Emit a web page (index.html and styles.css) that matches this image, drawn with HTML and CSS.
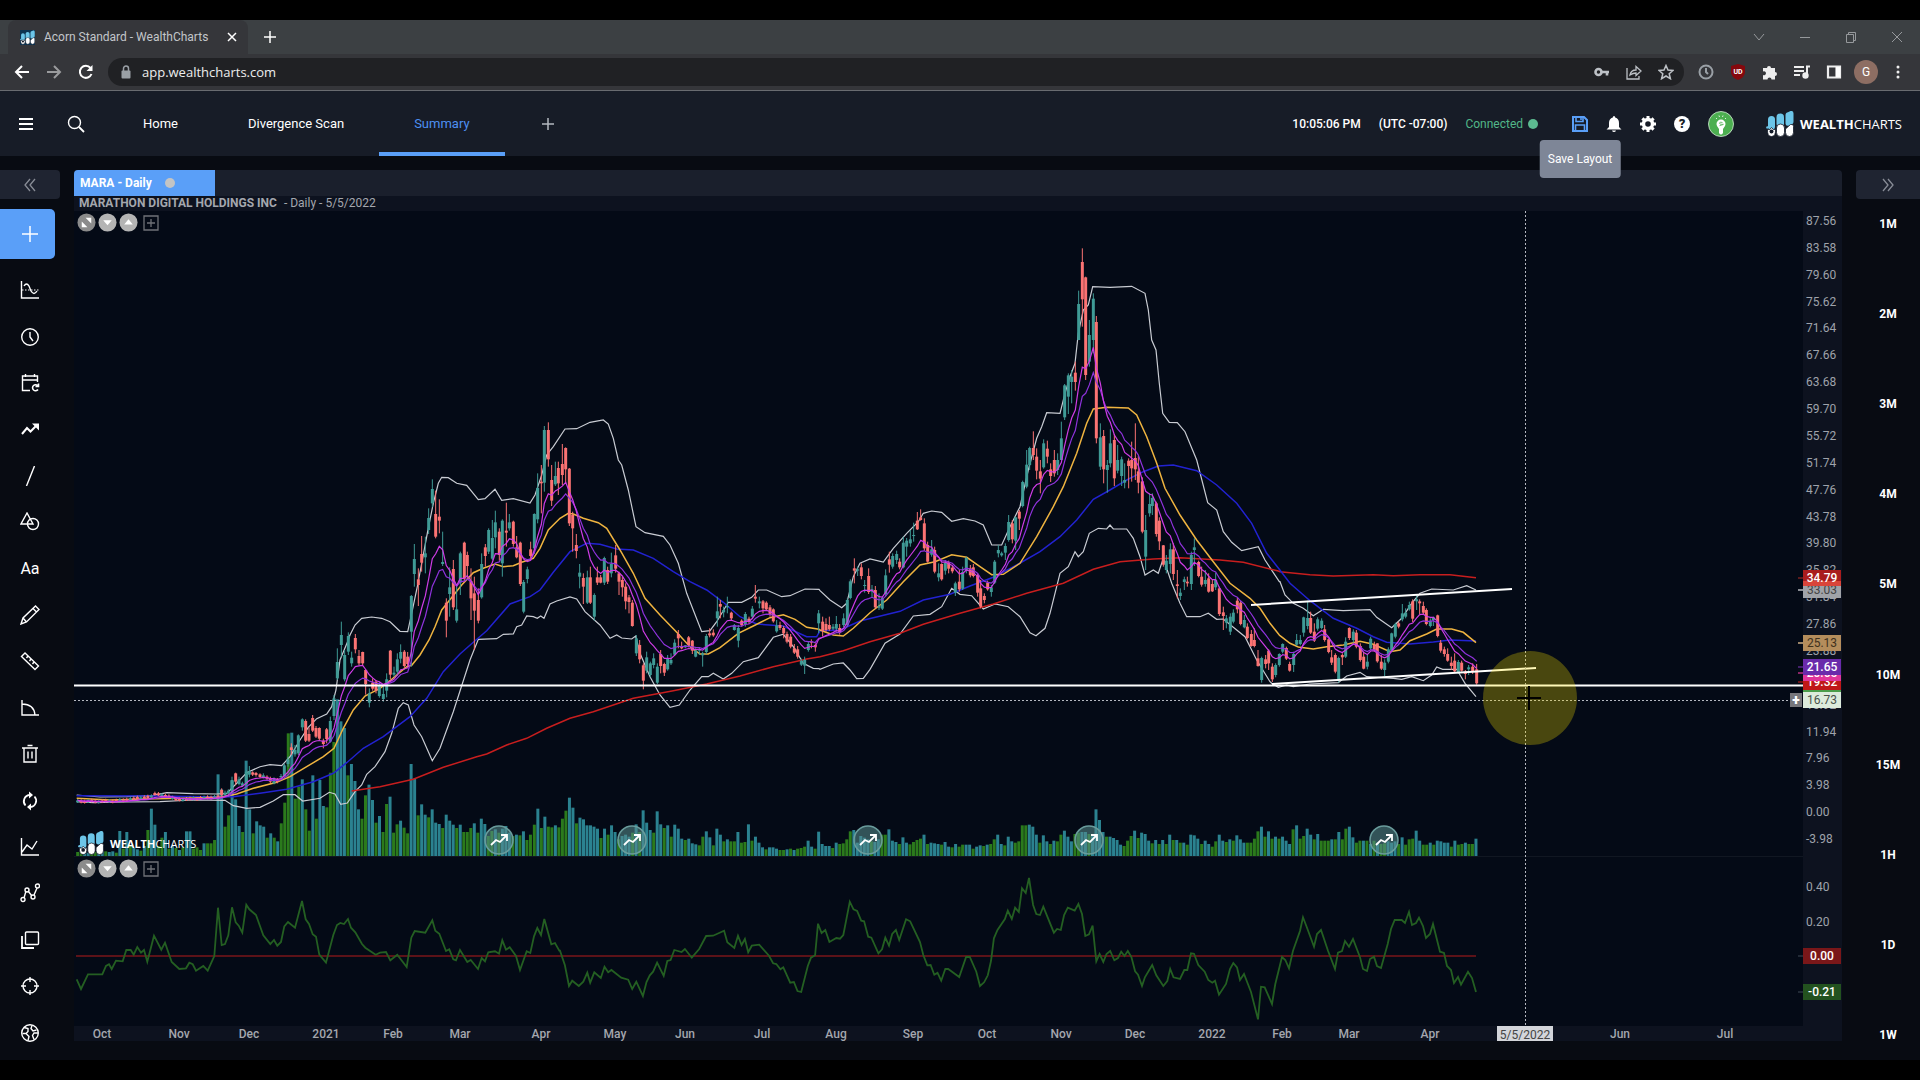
FILE: index.html
```html
<!DOCTYPE html>
<html lang="en">
<head>
    <meta charset="UTF-8">
    <meta name="viewport" content="width=device-width, initial-scale=1.0">
    <title>Acorn Standard - WealthCharts</title>
    <link rel="stylesheet" href="styles.css">
</head>
<body>
    <svg class="defs" width="0" height="0">
        <symbol id="logo" viewBox="0 0 28 26">
            <g fill="#6cc5e8">
                <rect x="2" y="5" width="7" height="14" rx="3.5"/>
                <rect x="10.500" y="2.500" width="7.500" height="14" rx="3.700"/>
                <path d="M19.500 4q0-2.500 3-3l2-1q3-.5 3 2.500v8q0 3-4 4t-4-2z"/>
                <circle cx="1.500" cy="16.500" r="1.300"/>
            </g>
            <g fill="#fff" stroke="#131a28" stroke-width=".8">
                <path d="M1.500 18q2.500 2 4-1.500 2 3.500 4 1.500.500 7.500-4 7.500t-4-7.500z"/>
                <rect x="10.500" y="13" width="8" height="12.500" rx="4"/>
                <path d="M19.500 18l5-4.500q3-1 3 2v6q0 4-4 4t-4-4z"/>
            </g>
            <circle cx="5.500" cy="20.500" r="2" fill="#131a28"/>
        </symbol>
        <symbol id="expand" viewBox="0 0 20 20">
            <circle cx="10" cy="10" r="9.500" fill="#8b8b8b"/>
            <path d="M9 5h6v6zM5 9v6h6z" fill="#fff"/>
        </symbol>
        <symbol id="down" viewBox="0 0 20 20">
            <circle cx="10" cy="10" r="9.500" fill="#b4b4b4"/>
            <path d="M5.500 7.500h9L10 13z" fill="#fff"/>
        </symbol>
        <symbol id="up" viewBox="0 0 20 20">
            <circle cx="10" cy="10" r="9.500" fill="#b4b4b4"/>
            <path d="M5.500 12h9L10 6.500z" fill="#fff"/>
        </symbol>
        <symbol id="plusbox" viewBox="0 0 16 16">
            <path d="M1 1h14v14H1zM8 4v8M4 8h8" fill="none" stroke="#6f7278" stroke-width="1.300"/>
        </symbol>
    </svg>

    <div class="tabstrip">
        <div class="browser-tab">
            <svg class="favicon" width="15" height="15"><use href="#logo"/></svg>
            <span>Acorn Standard - WealthCharts</span>
            <button aria-label="Close tab"><svg width="10" height="10" viewBox="0 0 10 10"><path d="M1 1l8 8M9 1L1 9"/></svg></button>
        </div>
        <button class="new-tab" aria-label="New tab"><svg width="12" height="12" viewBox="0 0 12 12"><path d="M6 0v12M0 6h12"/></svg></button>
        <div class="window-buttons">
            <button aria-label="Search tabs"><svg width="12" height="12" viewBox="0 0 12 12"><path d="M1 3l5 6 5-6"/></svg></button>
            <button aria-label="Minimize"><svg width="12" height="12" viewBox="0 0 12 12"><path d="M1 6.500h10"/></svg></button>
            <button aria-label="Restore"><svg width="12" height="12" viewBox="0 0 12 12"><path d="M1.500 3.500h7v8h-7zM3.500 3.500v-2h7v8h-2"/></svg></button>
            <button aria-label="Close"><svg width="12" height="12" viewBox="0 0 12 12"><path d="M1 1l10 10M11 1L1 11"/></svg></button>
        </div>
    </div>

    <div class="toolbar">
        <div class="nav-buttons">
            <button aria-label="Back"><svg width="16" height="16" viewBox="0 0 16 16"><path d="M15 8H2M8 2L2 8l6 6"/></svg></button>
            <button aria-label="Forward" class="dim"><svg width="16" height="16" viewBox="0 0 16 16"><path d="M1 8h13M8 2l6 6-6 6"/></svg></button>
            <button aria-label="Reload"><svg width="16" height="16" viewBox="0 0 16 16"><path d="M13.500 10A6 6 0 1 1 12.500 4"/><path d="M14.500 1v6h-6z" fill="#fff" stroke="none"/></svg></button>
        </div>
        <div class="address">
            <svg width="10" height="14" viewBox="0 0 10 14"><path d="M2.500 6V3.500a2.500 2.500 0 0 1 5 0V6" fill="none" stroke="#9aa0a6" stroke-width="1.500"/><rect x="0.500" y="5.500" width="9" height="8" rx="1" fill="#9aa0a6"/></svg>
            <input type="text" value="app.wealthcharts.com" aria-label="Address">
            <button aria-label="Passwords"><svg width="16" height="16" viewBox="0 0 16 16"><circle cx="4.500" cy="8" r="3" stroke-width="2.600"/><path d="M7 8h8M13 8v3.500" stroke-width="2.600"/></svg></button>
            <button aria-label="Share"><svg width="16" height="16" viewBox="0 0 16 16"><path d="M1 4v11h12v-3M4 11q1-5 6-5V2.500L15 7l-5 4.500V9q-3 0-6 2z" stroke-width="1.300"/></svg></button>
            <button aria-label="Bookmark"><svg width="16" height="16" viewBox="0 0 16 16"><path d="M8 1.500l2 4.600 5 .4-3.800 3.300 1.200 4.900L8 12l-4.400 2.700 1.200-4.900L1 6.500l5-.4z" stroke-width="1.500"/></svg></button>
        </div>
        <div class="extensions">
            <button aria-label="Timer"><svg width="16" height="16" viewBox="0 0 16 16"><circle cx="8" cy="8" r="6.500" stroke="#9aa0a6"/><path d="M8 4v4l2 2" stroke="#9aa0a6"/></svg></button>
            <button aria-label="Blocker" class="shield"><svg width="16" height="16" viewBox="0 0 16 16"><path d="M8 0l7 2v6q0 5-7 8-7-3-7-8V2z" fill="#85080d" stroke="none"/></svg><span>UD</span></button>
            <button aria-label="Extensions"><svg width="16" height="16" viewBox="0 0 16 16"><path d="M1 4h4a2 2 0 1 1 4 0h4v4a2 2 0 1 1 0 4v3.500H9.500a2 2 0 1 0-4 0H1V11a2 2 0 1 0 0-3.500z" fill="#eee" stroke="none"/></svg></button>
            <button aria-label="Media"><svg width="16" height="16" viewBox="0 0 16 16"><path d="M0 3h10M0 7h10M0 11h6M13 11V2.500h3"/><circle cx="11.500" cy="11.500" r="2.200" fill="#eee"/></svg></button>
            <button aria-label="Side panel"><svg width="16" height="16" viewBox="0 0 16 16"><path d="M2 2.500h12v11H2zM10.500 3v10" stroke-width="2.200"/><path d="M10 3h4v10h-4z" fill="#fff" stroke="none"/></svg></button>
            <button aria-label="Profile" class="avatar">G</button>
            <button aria-label="Menu"><svg width="16" height="16" viewBox="0 0 16 16"><g fill="#eee" stroke="none"><circle cx="8" cy="3" r="1.500"/><circle cx="8" cy="8" r="1.500"/><circle cx="8" cy="13" r="1.500"/></g></svg></button>
        </div>
    </div>

    <header class="app-header">
        <button class="menu" aria-label="Menu"><svg width="14" height="14" viewBox="0 0 14 14"><path d="M0 2h14M0 7h14M0 12h14" stroke-width="2"/></svg></button>
        <button class="search" aria-label="Search"><svg width="18" height="18" viewBox="0 0 18 18"><circle cx="7.500" cy="7.500" r="6" stroke-width="1.400"/><path d="M12 12l5 5" stroke-width="1.800"/></svg></button>
        <nav>
            <a href="#">Home</a>
            <a href="#">Divergence Scan</a>
            <a href="#" class="active">Summary</a>
        </nav>
        <button class="add-layout" aria-label="Add layout"><svg width="12" height="12" viewBox="0 0 12 12"><path d="M6 0v12M0 6h12" stroke="#b4b8c0"/></svg></button>
        <div class="status">
            <span>10:05:06 PM</span>
            <span>(UTC -07:00)</span>
            <span class="connected">Connected</span>
        </div>
        <div class="actions">
            <div class="save-wrap">
                <button aria-label="Save Layout"><svg width="16" height="16" viewBox="0 0 16 16"><path d="M1 1h11l3 3v11H1z" stroke="#5a9ff8" stroke-width="2"/><path d="M4 1v4.500h7V1M3.500 15V9h9v6M9 2v2" stroke="#5a9ff8" stroke-width="1.600"/></svg></button>
                <div class="tooltip">Save Layout</div>
            </div>
            <button aria-label="Alerts"><svg width="16" height="16" viewBox="0 0 16 16"><path d="M8 0q1.200 0 1.200 1.500Q13 2.800 13 7v4l2.500 2.500H.5L3 11V7q0-4.200 3.800-5.500Q6.800 0 8 0zM6 14.500h4q-.5 1.500-2 1.500t-2-1.500z" fill="#fff" stroke="none"/></svg></button>
            <button aria-label="Settings"><svg width="16" height="16" viewBox="0 0 16 16"><circle cx="8" cy="8" r="4.500" stroke-width="3.400"/><path d="M8 0v3M8 13v3M0 8h3M13 8h3M2.400 2.400l2 2M11.600 11.600l2 2M2.400 13.600l2-2M11.600 4.400l2-2" stroke-width="3"/></svg></button>
            <button aria-label="Help" class="help">?</button>
            <button aria-label="Ideas"><svg width="26" height="26" viewBox="0 0 26 26"><circle cx="13" cy="13" r="12.500" fill="#4caf50" stroke="#d6ecd7" stroke-width=".8"/><path d="M13 8.500a4.500 4.500 0 0 1 4.500 4.800q0 2-2.500 4.700v4q-2 3-4 0v-4q-2.500-2.700-2.500-4.700A4.500 4.500 0 0 1 13 8.500z" fill="#fff" stroke="none"/><path d="M8 7l1 1M11 4.500l.5 1.500M15 4.500L14.500 6M18 7l-1 1" stroke-width=".8"/><path d="M14.500 11.500q-3-1-3 .6t3 1.200-3 1.400" stroke="#4caf50" stroke-width=".8"/></svg></button>
        </div>
        <a href="#" class="brand"><svg width="28" height="26"><use href="#logo"/></svg><span><b>WEALTH</b>CHARTS</span></a>
    </header>

    <main class="workspace">
        <aside class="tools">
            <button class="collapse" aria-label="Collapse"><svg width="14" height="14" viewBox="0 0 14 14"><path d="M7 1L2 7l5 6M12 1L7 7l5 6"/></svg></button>
            <button class="add" aria-label="Add"><svg width="16" height="16" viewBox="0 0 16 16"><path d="M8 0v16M0 8h16"/></svg></button>
            <div class="tool-list">
                <button aria-label="Indicators"><svg viewBox="0 0 20 20"><path d="M1.500 1v17H19"/><path d="M4 6q2.500-4 5 0l2 5q3 5 6 0" /><path d="M2 10h17" stroke-dasharray="1.500 1.500" stroke-width="1"/></svg></button>
                <button aria-label="Time"><svg viewBox="0 0 20 20"><circle cx="10" cy="10" r="8.300"/><path d="M10 5v5l3 4"/></svg></button>
                <button aria-label="Calendar"><svg viewBox="0 0 20 20"><path d="M10 17.500H2.500V3h15v6M2.500 7h15M5.500 1v3M14.500 1v3"/><path d="M18 13a3 3 0 1 0 0 3.500M18.500 10.500V13.500h-3" stroke-width="1.600"/></svg></button>
                <button aria-label="Trend"><svg viewBox="0 0 20 20"><path d="M2 15l5-6 3.500 3.500L17 6" stroke-width="2"/><path d="M12 4.500h7v7z" fill="#fff" stroke="none"/></svg></button>
                <button aria-label="Line"><svg viewBox="0 0 20 20"><path d="M6.500 20l8-20"/></svg></button>
                <button aria-label="Shapes"><svg viewBox="0 0 20 20"><path d="M7 1L1 12h12z"/><circle cx="13" cy="12" r="5.500"/></svg></button>
                <button aria-label="Text" class="text-tool">Aa</button>
                <button aria-label="Pencil"><svg viewBox="0 0 20 20"><path d="M1 19l2-6L15.500 1l3.500 3.500L6.500 17zM3 13l3.500 4M13 3.500L16.500 7"/></svg></button>
                <button aria-label="Ruler"><svg viewBox="0 0 20 20"><path d="M5 2L1.500 5.500 15 18.500l3.500-3.500zM8 5L6.500 7M11 8L9.500 10M14 11l-1.500 2"/></svg></button>
                <button aria-label="Angle"><svg viewBox="0 0 20 20"><path d="M2 2v15h17M2 6q12 0 13 11"/></svg></button>
                <button aria-label="Delete"><svg viewBox="0 0 20 20"><path d="M2 4h16M7.500 1.500h5M4 4v14h12V4M8 7.500v7M12 7.500v7"/></svg></button>
                <button aria-label="Sync"><svg viewBox="0 0 20 20"><path d="M5.500 14.500A6.300 6.300 0 0 1 9.500 4M14.500 5.500A6.300 6.300 0 0 1 10.500 16" stroke-width="1.800"/><path d="M9 .5L13 4 9 7.500zM11 12.500L7 16l4 3.500z" fill="#fff" stroke="none"/></svg></button>
                <button aria-label="Chart"><svg viewBox="0 0 20 20"><path d="M1.500 1v17H19M2 15l5-7 5 4 5-8"/></svg></button>
                <button aria-label="Pattern"><svg viewBox="0 0 20 20"><path d="M4 15l2-7M8 8l4 5M14 12l3-7"/><circle cx="3" cy="16.500" r="2"/><circle cx="7" cy="7" r="2"/><circle cx="13" cy="14" r="2"/><circle cx="17.500" cy="3" r="2"/></svg></button>
                <button aria-label="Copy"><svg viewBox="0 0 20 20"><rect x="5.500" y="2" width="13" height="12.500" rx="1"/><path d="M2 6v12h12" stroke-width="1.800"/></svg></button>
                <button aria-label="Crosshair"><svg viewBox="0 0 20 20"><circle cx="10" cy="10" r="7"/><path d="M10 1v5M10 14v5M1 10h5M14 10h5"/></svg></button>
                <button aria-label="World"><svg viewBox="0 0 20 20"><circle cx="10" cy="10" r="8.300"/><path d="M4 4.500l4 1v3l-2 2H2.500M6 10.500l3 3-1 4M12 2.500l-1 3 2 2.500 3.500-1M18 10h-4l-1.500 2.500 1.500 4"/></svg></button>
            </div>
        </aside>

        <section class="chart">
            <div class="chart-tabs">
                <button class="chart-tab">MARA - Daily<i></i></button>
            </div>
            <div class="chart-title"><b>MARATHON DIGITAL HOLDINGS INC</b><span>- Daily - 5/5/2022</span></div>
            <div class="chart-body">
                <div class="plot">
                    <svg id="plot" viewBox="74 211 1729 815" preserveAspectRatio="none"></svg>
                    <div class="pane-buttons">
                        <button aria-label="Maximize"><svg><use href="#expand"/></svg></button>
                        <button aria-label="Move down"><svg><use href="#down"/></svg></button>
                        <button aria-label="Move up"><svg><use href="#up"/></svg></button>
                        <button aria-label="Add study" class="box"><svg><use href="#plusbox"/></svg></button>
                    </div>
                    <div class="pane-buttons lower">
                        <button aria-label="Maximize"><svg><use href="#expand"/></svg></button>
                        <button aria-label="Move down"><svg><use href="#down"/></svg></button>
                        <button aria-label="Move up"><svg><use href="#up"/></svg></button>
                        <button aria-label="Add study" class="box"><svg><use href="#plusbox"/></svg></button>
                    </div>
                    <div class="brand watermark"><svg width="26" height="24"><use href="#logo"/></svg><span><b>WEALTH</b>CHARTS</span></div>
                    <button class="add-line" aria-label="Add line">+</button>
                </div>
                <div class="price-axis" id="price-axis"></div>
            </div>
            <div class="time-axis" id="time-axis"></div>
        </section>

        <aside class="periods">
            <button class="collapse" aria-label="Expand"><svg width="14" height="14" viewBox="0 0 14 14"><path d="M2 1l5 6-5 6M7 1l5 6-5 6"/></svg></button>
            <div class="period-list">
                <button>1M</button>
                <button>2M</button>
                <button>3M</button>
                <button>4M</button>
                <button>5M</button>
                <button>10M</button>
                <button>15M</button>
                <button>1H</button>
                <button>1D</button>
                <button>1W</button>
            </div>
        </aside>
    </main>

    <script src="chart.js"></script>
</body>
</html>
```
FILE: styles.css
```css
* {
    box-sizing: border-box;
}
body {
    margin: 0;
    min-height: 100vh;
    padding: 20px 0;
    display: flex;
    flex-direction: column;
    background: #000;
    color: #fff;
    font-family: Roboto, "Liberation Sans", sans-serif;
    font-size: 12px;
    overflow: hidden;
}
button {
    display: flex;
    align-items: center;
    justify-content: center;
    padding: 0;
    border: 0;
    background: none;
    color: inherit;
    font: inherit;
    cursor: pointer;
}
button svg {
    fill: none;
    stroke: #fff;
    stroke-width: 1.5;
}
a {
    color: inherit;
    text-decoration: none;
}
.defs {
    position: absolute;
}

/* browser */
.tabstrip {
    display: flex;
    align-items: center;
    height: 34px;
    padding-left: 8px;
    background: #3c4043;
}
.browser-tab {
    display: flex;
    align-items: center;
    gap: 9px;
    width: 240px;
    height: 34px;
    padding: 0 11px 0 12px;
    border-radius: 8px 8px 0 0;
    background: #35363a;
    color: #c3c6ca;
    white-space: nowrap;
}
.browser-tab span {
    flex: 1;
}
.favicon {
    background: #0d3350;
}
.new-tab {
    width: 44px;
}
.window-buttons {
    display: flex;
    margin-left: auto;
}
.window-buttons button {
    width: 46px;
}
.window-buttons svg {
    stroke: #96999c;
    stroke-width: 1;
}
.toolbar {
    display: flex;
    align-items: center;
    height: 37px;
    border-bottom: 1px solid #696b70;
    background: #35363a;
}
.nav-buttons {
    display: flex;
    gap: 16px;
    width: 108px;
    padding-left: 14px;
}
.nav-buttons svg {
    stroke-width: 2;
}
.dim {
    opacity: .5;
}
.address {
    flex: 1;
    display: flex;
    align-items: center;
    gap: 16px;
    height: 28px;
    padding: 0 10px 0 13px;
    border-radius: 14px;
    background: #202124;
}
.address input {
    flex: 1;
    margin-left: -5px;
    padding: 0;
    border: 0;
    background: none;
    color: #eee;
    font-family: "Open Sans", sans-serif;
    font-size: 13px;
}
.address button svg {
    stroke: #bdc1c6;
}
.extensions {
    display: flex;
    gap: 8px;
    padding: 0 10px;
}
.extensions button {
    width: 24px;
    height: 24px;
}
.extensions svg {
    stroke: #eee;
    stroke-width: 2;
}
.shield {
    position: relative;
}
.shield span {
    position: absolute;
    font-size: 7px;
    font-weight: 700;
}
.extensions .avatar {
    border-radius: 50%;
    background: #8d6e63;
}

/* app header */
.app-header {
    display: flex;
    align-items: center;
    height: 65px;
    padding-right: 18px;
    background: #171c27;
}
.menu {
    width: 52px;
}
.search {
    width: 48px;
}
.app-header nav {
    display: flex;
    margin-left: 8px;
    align-self: stretch;
}
.app-header nav a {
    display: flex;
    align-items: center;
    padding: 4px 35px 0;
    border-bottom: 4px solid transparent;
    font-size: 13px;
}
.app-header nav .active {
    border-color: #5a9ff8;
    color: #4d8ff0;
}
.add-layout {
    width: 86px;
}
.status {
    display: flex;
    gap: 18px;
    margin-left: auto;
    font-weight: 500;
}
.connected {
    display: flex;
    align-items: center;
    gap: 5px;
    color: #52b788;
    font-weight: 400;
}
.connected::after {
    content: "";
    width: 10px;
    height: 10px;
    border-radius: 50%;
    background: #5cba90;
}
.actions {
    display: flex;
    align-items: center;
    gap: 18px;
    margin: 0 32px 0 34px;
}
.save-wrap {
    position: relative;
}
.tooltip {
    position: absolute;
    z-index: 5;
    top: 24px;
    left: 50%;
    transform: translateX(-50%);
    padding: 11px 8px;
    border-radius: 4px;
    background: #7e8697;
    line-height: 16px;
    white-space: nowrap;
}
.help {
    width: 16px;
    height: 16px;
    border-radius: 50%;
    background: #fff;
    color: #171c27;
    font-size: 13px;
    font-weight: 900;
}
.brand {
    display: flex;
    align-items: center;
    gap: 6px;
    font-family: "Open Sans", sans-serif;
    font-size: 13px;
}

/* workspace */
.workspace {
    flex: 1;
    display: flex;
    gap: 14px;
    padding-top: 14px;
    background: #080b12;
}
.tools {
    display: flex;
    flex-direction: column;
    width: 60px;
}
.collapse {
    width: 100%;
    height: 29px;
    border-radius: 0 4px 4px 0;
    background: #1f2431;
}
.collapse svg {
    stroke: #888c96;
    stroke-width: 1.3;
}
.add {
    width: 55px;
    height: 50px;
    margin: 10px 0 8px;
    padding-left: 5px;
    border-radius: 0 5px 5px 0;
    background: #5a9ff8;
}
.tool-list {
    flex: 1;
    display: flex;
    flex-direction: column;
    padding-bottom: 4px;
}
.tool-list button {
    flex: 1;
}
.tool-list svg {
    width: 20px;
    height: 20px;
    stroke-width: 1.4;
}
.text-tool {
    font-size: 16px;
}
.chart {
    flex: 1;
    display: flex;
    flex-direction: column;
    margin-bottom: 19px;
}
.chart-tabs {
    display: flex;
    height: 26px;
    border-radius: 4px 4px 0 0;
    background: #1a1f2c;
}
.chart-tab {
    justify-content: flex-start;
    gap: 13px;
    width: 141px;
    padding-left: 6px;
    border-radius: 4px 0 0 0;
    background: #5a9ff8;
    font-weight: 700;
}
.chart-tab i {
    width: 10px;
    height: 10px;
    border-radius: 50%;
    background: #c4c4c4;
}
.chart-title {
    display: flex;
    gap: 7px;
    height: 15px;
    padding-left: 5px;
    background: #0d121f;
    color: #a4a7ae;
    line-height: 14px;
}
.chart-body {
    flex: 1;
    display: flex;
}
.plot {
    position: relative;
    flex: 1;
    background: #040a16;
}
#plot {
    position: absolute;
    width: 100%;
    height: 100%;
}
.pane-buttons {
    position: absolute;
    top: 2px;
    left: 3px;
    display: flex;
    align-items: center;
    gap: 2px;
}
.pane-buttons.lower {
    top: 648px;
}
.pane-buttons svg {
    width: 19px;
    height: 19px;
    stroke: none;
}
.pane-buttons .box {
    margin-left: 3px;
}
.pane-buttons .box svg {
    width: 16px;
    height: 16px;
}
.watermark {
    position: absolute;
    top: 620px;
    left: 4px;
    font-size: 11px;
}
.add-line {
    position: absolute;
    top: 482px;
    right: 1px;
    width: 12px;
    height: 14px;
    background: #77777c;
    font-size: 14px;
    font-weight: 900;
}
.price-axis {
    position: relative;
    width: 39px;
    background: #0d121f;
    color: #9fa3ab;
}
.price-axis span {
    position: absolute;
    left: 3px;
    line-height: 16px;
    margin-top: -8px;
}
.price-axis .tag {
    left: 0;
    width: 38px;
    color: #fff;
    font-weight: 500;
    text-align: center;
}
.price-axis .red { background: linear-gradient(#a91d1d 70%, #d9453a 70%); }
.price-axis .gray { background: #a0a3a8; color: #444; font-weight: 400; }
.price-axis .tan { background: #b48d5c; color: #40311c; font-weight: 400; }
.price-axis .violet { background: #6a2bab; }
.price-axis .pink { background: #e0359a; }
.price-axis .crimson { background: #c01818; }
.price-axis .lime { background: #4a9d4a; }
.price-axis .pale { background: #dcebdc; color: #4a524a; font-weight: 400; }
.price-axis .maroon { background: #7a1719; }
.price-axis .green { background: #23521f; }
.time-axis {
    position: relative;
    height: 15px;
    background: #0d121f;
    color: #a4a7ae;
    font-weight: 500;
    line-height: 17px;
}
.time-axis span {
    position: absolute;
    transform: translateX(-50%);
}
.time-axis .date {
    width: 56px;
    height: 15px;
    background: #d3d5da;
    color: #444;
    font-weight: 400;
    line-height: 19px;
    text-align: center;
}
.periods {
    display: flex;
    flex-direction: column;
    width: 64px;
}
.periods .collapse {
    border-radius: 4px 0 0 4px;
}
.period-list {
    flex: 1;
    display: flex;
    flex-direction: column;
    justify-content: space-between;
    padding: 17px 0;
}
.period-list button {
    height: 16px;
    font-weight: 700;
}

/* chart drawing */
#plot path, #plot line {
    fill: none;
}
#plot .up { stroke: #3f9b96; }
#plot .down { stroke: #fb7373; }
#plot .body { stroke-width: 3; }
#plot .vol-t { stroke: #2b8290; stroke-width: 3; }
#plot .vol-g { stroke: #2b7a1c; stroke-width: 3; }
#plot .band { stroke: #c9ccd3; stroke-width: 1.2; }
#plot .mid { stroke: #efb440; stroke-width: 1.5; }
#plot .blue { stroke: #2222d0; stroke-width: 1.5; }
#plot .long { stroke: #c81e1e; stroke-width: 1.5; }
#plot .fast { stroke: #cf3ce6; stroke-width: 1.2; }
#plot .slow { stroke: #8f33dc; stroke-width: 1.2; }
#plot .osc { stroke: #245f22; stroke-width: 1.8; }
#plot .zero { stroke: #5c1218; stroke-width: 2; }
#plot .trend { stroke: #fff; stroke-width: 2; }
#plot .cross { stroke: #b5b8c0; stroke-dasharray: 2 2; }
#plot .split { stroke: #111722; }
#plot .cursor { stroke: #000; stroke-width: 2; }
#plot .halo { fill: #ffe600; fill-opacity: .28; }
#plot .marker circle { fill: #5a9090; fill-opacity: .55; stroke: #6a9c9c; stroke-width: 1.5; }
#plot .marker path { stroke: #fff; stroke-width: 1.8; }
```
FILE: chart.js
```javascript
// Every data block has its own origin [x, y] and x scale; y runs in thirds of a unit.
const A = [60, 640, 1 / 3];
const B = [340, 400, 1 / 3];
const C = [820, 230, 1 / 3];
const D = [1160, 540, 1 / 3];
const E = [560, 780, 0.40816];
const F = [1180, 780, 1 / 3];

const plot = document.getElementById('plot');

function add(tag, cls, attrs, parent = plot) {
    const el = document.createElementNS('http://www.w3.org/2000/svg', tag);
    if (cls) el.setAttribute('class', cls);
    for (const key in attrs) el.setAttribute(key, attrs[key]);
    parent.appendChild(el);
    return el;
}

function toPath(points) {
    return 'M' + points.map(p => p[0].toFixed(1) + ' ' + p[1].toFixed(1)).join('L');
}

function line(cls, ...blocks) {
    const points = [];
    for (const [o, text] of blocks) {
        for (const pair of text.split(' ')) {
            const [x, y] = pair.split(',').map(Number);
            points.push([o[0] + x * o[2], o[1] + y / 3]);
        }
    }
    add('path', cls, { d: toPath(points) });
}

// volume, one bar per session: block, first x, step, bars
const volume = [
    [A, 53, 10.53, 'g12 g14 t12 t10 g16 g12 t20 t14 g14 t12 t14 g10 t75 g22 t72 g30 t24 t20 g16 t30 g78 t142 t94 g30 g55 t72 g22 t30 g24 t18 g26 t74 t74 g22 g26 g18 t38 g38 g38 g48 t245 t200 g88 g122 t225 t170 t90 g72 t286 t140 g68 t104 t92 t88 g55 t68 g55 t44 g98 g160 g368 t370 g172 g208 t230 g140 g76 t242 g112 t228 t150 g146 g250 g342 t470 t404 t384 g242 t276 t225 t140 g112 g182 t214 t168 g100 t120 g72 g156 t178 g70 g95 t106 g85 g68 t276 t232 g122 t155 t124 g116 t140 t100 t96 g84 t124 t106 t94 g84 t94 g72 g72 g84 t98 g70 t112 t96 g60 g75 t80 g70 t82 t90 t70 g60 t64 g62 t74 g48 g64'],
    [B, 583, 10.53, 'g94 t142 g84 t118 g88 g86 t92 g86 g112 g136 t175 t145 g98 t115 t110 t92 t92 t88 t82 g54 t82 g64 t92 t72 g50 t60 t64 t58 g70 t95 g72 t137 t100 t78 g70 t134 t95 g84 t92 g58 t94 t82 t52 g48 t52 t38 t35 g32 g58 t74 t56 g32 t82 t64 g44 t50 g44 g44 t72 g40 g42 t95 g46 t58 t40 t26 g20 t26 t26 t22 g18 g18 t20 g22 t18 g22 g24 g28 t46 t28 g22 t73 t36 t30 t30 g24 t40 g36'],
    [E, 694, 8.6, 'g38 g50 g74 t78 t40 t60 t55 t50 g44 t42 t50 g64 g64 t80 t46 t42 g36 t56 t40 g35 g42 g48 g52 t64 g36 t40 t38 t36 g34 t42 t28 g26 t36 g28 g34 t34 t34 g22 t28 t32 g30 t34 g36 g50 t64 t36 g32 t58 t44 g40 g44 g92 g92 t94 t88 t64 g40 t62 t44 g36 t46 g44 g64 t76 t58 t44 g66 g70 t72 t72 g66 t66 t140 t108 t72 g58 t58 t54 t48 t34 g30 g46 g60 t76 g54 t70 t66 t46 g38 t48 g36 t48 g36 t64 g48 t48 g40 t40 g34 t64 t62 t52'],
    [F, 65, 10.55, 'g36 t46 t36 g28 g44 t64 t46 g42 t50 g46 t62 t50 t40 g40 g40 g52 g74 t88 g58 t74 g52 t58 g52 t58 t46 t36 g80 t92 g52 g60 t82 t64 g50 t66 g46 g46 g46 t50 g50 t72 g50 g82 t88 t56 g40 g46 t46 g46 t36 g46 t40 g36 g38 t44 t40 t44 g36 t56 g34 g50 g52 t76 t46 g34 g34 t40 g34 t46 t44 t40 t40 g28 t46 g34 g36 t40 g36 g36 t52']
];
for (const [o, start, step, bars] of volume) {
    bars.split(' ').forEach((bar, i) => {
        const x = o[0] + (start + i * step) * o[2];
        add('line', 'vol-' + bar[0], { x1: x, x2: x, y1: 856, y2: 856 - bar.slice(1) / 3 });
    });
}

// studies
line('band',
    [A, '50,465 120,471 200,470 280,466 320,458 400,461 470,462 500,460 525,435 560,398 600,380 630,374 665,377 690,350 720,300 745,262 770,236 800,222 815,200 828,150 840,60 865,0'],
    [B, '30,705 45,675 65,655 95,651 125,655 150,665 180,694 203,695 215,640 232,560 245,490 262,400 280,310 295,250 305,232 325,233 350,250 380,256 415,299 435,296 465,268 485,301 520,296 570,309 585,285 605,225 620,165 640,140 675,87 710,86 750,67 790,60 805,72 820,115 835,180 845,195 865,270 888,380 915,398 970,409 990,435 1015,490 1040,580 1085,695 1110,692 1130,665 1165,607 1205,607 1235,592 1255,570 1280,570 1325,590 1350,587 1395,567 1437,568'],
    [C, '0,1082 30,1110 65,1133 80,1120 100,1040 120,1000 150,987 190,996 220,955 260,910 295,875 310,850 335,843 365,847 395,874 430,866 465,873 490,885 515,945 545,945 570,890 600,830 625,720 650,625 665,590 680,548 720,550 735,490 750,440 765,400 775,310 790,240 805,225 818,170 870,172 935,169 975,190 985,240 995,330 1008,360 1018,460 1028,550 1048,577 1072,578 1095,605 1130,690 1163,818 1190,840 1210,905 1235,937 1265,962 1315,950 1335,990 1378,1055'],
    [D, '360,125 375,165 400,190 430,205 460,227 490,208 550,212 630,209 650,232 695,263 725,235 755,190 780,160 815,147 880,150 920,137 948,150']);
line('band',
    [A, '50,485 100,488 200,486 300,485 400,480 495,481 520,497 560,505 600,502 640,483 670,464 705,464 728,483 780,475 808,457 825,462 842,493 862,489 885,455 905,435 920,403 945,380 975,335 995,280 1015,205 1030,188 1045,195 1062,255 1085,290 1117,362 1140,325 1180,215 1230,60'],
    [B, '415,718 470,716 490,703 520,702 530,680 545,675 560,648 580,650 592,655 602,648 612,655 630,612 650,603 690,591 710,597 735,635 780,675 810,715 830,705 845,714 875,717 887,708 900,760 930,830 960,885 990,922 1018,915 1050,870 1085,830 1105,830 1120,820 1150,837 1175,820 1210,785 1255,773 1300,712 1330,703 1360,740 1390,790 1420,805 1437,806'],
    [C, '0,1318 40,1302 70,1299 90,1320 110,1346 130,1345 150,1318 195,1240 240,1212 280,1158 330,1153 365,1130 395,1075 420,1093 455,1097 490,1137 525,1122 565,1130 600,1160 630,1208 648,1217 675,1195 690,1150 720,1030 745,1010 765,965 775,980 790,965 808,910 835,895 860,897 870,885 880,897 920,897 940,925 960,980 975,1035 1000,1020 1015,1030 1030,985 1055,1060 1080,1120 1100,1160 1140,1160 1165,1150 1190,1168 1210,1167 1250,1200 1275,1220 1310,1290 1350,1355'],
    [D, '335,430 355,442 380,435 400,440 450,432 535,428 560,408 600,397 620,410 700,415 725,418 755,410 790,422 815,405 830,381 848,388 890,388 915,430 948,470']);
line('long',
    [A, '875,453 960,440 1060,418 1150,382 1250,350'],
    [B, '440,1062 500,1035 560,1015 620,985 690,955 760,935 880,895 1000,872 1100,852 1200,828 1300,800 1400,777'],
    [C, '0,1280 70,1262 150,1235 240,1210 310,1183 420,1150 520,1122 620,1090 730,1060 820,1018 900,995 1000,987 1080,983 1200,990 1270,997 1375,1023'],
    [D, '360,95 450,104 520,108 640,104 700,107 780,104 870,104 948,113']);
line('blue',
    [A, '50,467 300,468 420,470 520,470 600,460 680,448 760,425 820,400 860,368 910,325 970,290 1050,230 1100,175 1150,95 1200,42'],
    [B, '400,727 440,692 510,612 570,590 600,570 640,517 690,455 740,430 780,433 830,447 880,450 940,475 1000,515 1050,545 1100,570 1150,607 1200,650 1250,672 1330,678 1400,710 1430,710'],
    [C, '0,1202 60,1200 120,1173 240,1144 310,1110 390,1093 450,1068 520,1042 590,1005 660,965 720,920 770,870 820,808 870,780 920,750 970,725 1015,708 1060,705 1130,722 1190,765 1250,820 1295,880 1340,970 1378,1018'],
    [D, '390,130 450,182 520,235 590,265 640,290 680,307 750,312 820,306 870,300 948,303']);
line('mid',
    [A, '50,475 150,480 250,477 400,474 480,472 530,462 580,445 650,427 690,410 740,380 790,350 822,325 850,265 880,210 915,168 960,145 990,122 1010,105 1040,80 1055,76 1080,45'],
    [B, '267,720 285,680 305,630 325,605 365,555 400,518 430,505 465,492 490,500 520,497 545,487 580,475 600,445 625,390 660,355 685,340 700,342 730,355 775,368 800,385 840,450 880,520 915,595 960,645 1010,697 1050,740 1080,762 1105,762 1140,743 1195,700 1240,678 1290,653 1330,644 1365,658 1400,682 1437,688'],
    [C, '0,1200 40,1215 70,1218 100,1195 150,1148 200,1110 250,1055 300,1005 345,995 395,974 440,982 480,1010 515,1034 550,1033 600,1000 650,920 700,830 730,770 770,670 800,580 820,537 860,532 925,534 950,555 980,620 1010,700 1035,775 1080,855 1130,930 1180,995 1230,1060 1290,1105 1320,1135 1350,1180 1378,1215'],
    [D, '360,287 390,310 415,321 460,327 500,320 550,315 600,304 640,313 690,335 720,330 750,302 800,282 830,267 875,267 910,277 948,308']);

// candles: colour + x, high, body top, body bottom, low
const candles = [];
'484 485 486 484 483 485 486 484 483 484 485 483 481 482 480 478 476 474 475 473 471 470 462 463 466 468 470 474 478 479 480 478 477 476 478 475 474 473 474 472 470'.split(' ').forEach((y, i) => {
    candles.push([A, i % 3 ? 'r' : 'g', 53 + i * 10.53, y - 7, y - 3, +y + 3, +y + 5]);
});
const groups = [
    [A, 'r485 445 450 465 468,g495 452 458 465 468,g505 448 452 460 463,g516 410 420 452 458,r527 398 400 425 435,g537 410 418 432 436,g547 425 430 437 440,g559 390 395 432 436,g568 378 394 404 412,r578 394 397 404 408,r588 396 399 405 410,r600 400 403 411 414,g610 400 406 411 415,r621 406 410 416 420,r631 410 414 425 430,g642 412 416 430 433,r652 414 418 426 430,g663 402 408 412 416,g673 370 376 408 410,g684 350 358 372 380,r694 310 322 330 345,g705 315 330 343 350,g715 283 286 340 345,g727 235 238 262 272,r737 238 243 302 306,r747 262 282 302 306,r758 225 234 272 276,r768 258 264 290 294,r778 262 264 296 300,r790 296 302 312 325,r800 264 268 297 310,g811 230 243 305 308,g822 165 175 228 240,g832 25 66 115 120'],
    [B, 'g4 665 705 735 770,g14 750 765 838 844,g25 697 708 755 765,g35 755 773 790 800,r46 702 714 748 760,r57 750 768 790 796,r68 755 756 790 796,r77 808 810 852 884,g88 865 880 908 922,r98 835 848 866 872,r108 840 845 872 880,g118 845 855 888 893,g130 855 882 897 905,g140 820 838 872 892,r151 750 752 824 838,g162 800 818 824 830,g172 760 778 815 828,g182 733 756 776 790,r193 750 755 798 803,r203 756 770 792 798,g214 585 588 695 800,g223 432 477 522 560,r235 505 538 555 618,r245 408 462 488 515,g256 410 460 472 520,g266 325 354 390 402,g277 238 267 310 322,r287 272 342 410 415,r298 298 350 362 400,g308 395 486 492 498,r319 595 608 662 712,g329 502 562 582 650,r340 480 507 622 630,g350 560 628 662 668,g361 455 460 548 585,r373 425 428 536 548,r382 455 465 498 540,r393 505 543 595 660,r403 530 580 632 750,r415 565 600 662 670,g425 460 492 592 596,r436 432 442 468 500,g446 385 390 455 462,g457 360 414 476 480,g466 332 367 412 445,r478 385 395 465 482,g487 358 362 490 530,r499 308 392 398 440,g508 342 367 385 392,r520 362 365 432 440,r530 408 442 472 475,r541 425 428 552 558,g551 540 546 635 640,g562 500 508 537 550,r572 425 448 468 480,g583 340 342 445 462,g593 220 264 358 370,r604 195 245 250 340,g613 78 90 248 275,r625 67 90 178 200,r635 195 240 302 318,g646 185 228 253 258,r655 185 204 250 285,r667 132 192 225 255,r677 142 144 208 250,r688 204 206 370 378,r698 335 345 385 455,r709 402 435 453 475,g719 492 518 530 565,r730 520 534 560 612,g742 512 532 608 612,r751 500 532 608 612,g763 580 585 650 662,r772 500 532 548 555,r782 525 532 548 550,g793 470 474 548 555,r803 500 510 545 552,g814 458 492 520 532,r827 435 466 506 518,r837 515 520 545 585,r847 530 540 562 590,r857 550 560 604 628,r867 585 592 606 640,r877 600 608 678 680,g889 705 715 760 768,r899 720 735 778 790,r910 790 796 842 868,g920 755 772 812 820,g931 785 790 825 832,g941 760 775 795 805,g952 790 800 848 852,r962 750 762 798 820,r973 788 792 818 828,g983 765 775 808 812,g993 760 780 790 795,g1004 718 728 764 768,r1015 690 702 715 745,r1025 725 738 745 748,g1036 735 736 742 745,r1046 708 712 735 742,r1057 720 722 752 762,g1067 745 752 770 772,g1078 742 748 752 765,g1088 755 760 766 800,g1099 702 708 756 762,r1109 685 700 706 712,r1120 688 698 706 710,g1132 590 634 655 680,r1141 600 612 620 655,g1151 620 630 637 652,g1162 590 618 622 640,r1174 635 638 655 660,g1183 672 675 690 692,g1195 675 684 722 742,r1205 658 662 675 680,g1216 636 642 672 680,r1227 650 656 666 672,g1237 618 626 650 655,r1246 555 590 596 608,g1258 590 604 610 625,r1269 600 604 625 640,r1279 604 608 628 630,r1290 615 622 645 650,r1300 625 628 664 668,g1310 660 676 694 698,r1320 665 675 684 690,r1331 678 684 700 715,r1341 695 702 725 730,r1352 702 710 740 745,r1363 732 745 758 762,r1373 738 748 770 776,g1384 776 782 794 798,g1394 770 780 797 822,g1405 725 732 750 755,r1414 718 724 728 745,r1426 730 735 742 755,g1436 630 640 670 700,r1448 650 665 692 710,r1458 655 672 690 695,r1468 650 675 688 692,g1479 672 680 686 690,g1489 648 672 686 695,r1499 672 684 698 704'],
    [C, 'g71 1150 1165 1185 1192,g82 1105 1110 1186 1190,g91 1048 1054 1104 1108,r103 985 1015 1022 1060,g113 1010 1018 1022 1038,r124 1000 1012 1038 1048,g134 1050 1065 1068 1088,r146 1015 1038 1086 1092,g156 1065 1078 1085 1102,r166 1068 1080 1132 1136,g177 1090 1128 1133 1140,g187 1100 1104 1136 1140,g197 1018 1036 1092 1098,r208 965 988 1004 1028,g218 970 978 1010 1016,g230 962 972 990 1002,r239 985 995 1012 1018,g250 920 938 1012 1015,g260 924 932 950 980,g271 900 928 940 950,g281 878 915 918 935,r292 846 872 898 900,r302 838 862 870 872,r313 865 880 955 962,r323 935 945 995 998,g335 930 958 974 980,r344 950 960 1025 1030,g356 1000 1030 1042 1054,r365 1000 1002 1048 1052,g376 990 998 1022 1034,r386 992 997 1016 1030,r397 1008 1013 1024 1030,g406 1055 1060 1088 1098,r418 1020 1055 1078 1085,g428 1010 1026 1076 1080,g439 980 984 1022 1030,r451 1005 1015 1036 1042,r460 1002 1012 1038 1042,r473 1030 1035 1088 1100,r482 1050 1075 1130 1135,r493 1090 1098 1110 1120,r503 1052 1058 1078 1082,g514 1065 1072 1086 1100,g524 990 995 1058 1062,g535 945 960 970 982,g545 965 970 976 980,g556 940 948 968 990,g566 855 876 930 935,r577 870 880 928 940,g587 860 862 932 960,r598 840 845 866 900,g608 752 756 828 832,g620 660 704 770 775,g629 650 654 705 720,r640 604 654 675 690,r650 655 680 722 748,r661 690 724 746 790,g671 628 640 712 716,r682 632 656 680 700,r692 700 718 738 756,r703 660 690 730 740,g713 670 690 720 735,g724 575 625 690 690,g734 462 466 562 570,g745 430 436 500 552,g755 420 440 456 520,r766 395 428 456 482,g776 182 222 330 330,r787 55 96 208 290,r797 140 142 435 450,g808 270 315 395 410,g820 190 206 330 370,r829 258 276 625 640,g841 580 622 710 720,r851 600 618 718 760,g862 690 705 720 788,g871 598 640 700 712,r883 612 630 745 768,g893 645 690 722 730,g905 680 688 738 768,g914 700 750 758 775,r926 685 692 708 775,r935 635 690 715 755,r946 580 684 718 750,r955 678 724 758 790,r967 742 754 905 910,g977 855 900 980 1020,g989 790 822 850 860,g997 790 804 828 855,r1009 815 820 912 920,r1018 862 872 934 960,r1030 945 946 1004 1010,g1039 975 992 1020 1030,g1051 940 958 1002 1030,r1060 940 958 1032 1050,r1072 1020 1063 1068 1105,g1081 1075 1088 1098 1110,g1093 1040 1048 1056 1080,r1102 1040 1055 1060 1070,g1114 965 975 1062 1080,g1123 925 952 960 1008,r1136 992 996 1038 1042,r1145 1010 1040 1064 1070,g1156 1020 1050 1062 1070,r1166 1030 1045 1085 1088,r1177 1050 1062 1084 1086,g1187 1028 1050 1072 1080,r1198 1070 1075 1152 1158,r1210 1130 1147 1158 1200,g1219 1155 1165 1178 1195,g1231 1150 1160 1205 1215,g1240 1138 1148 1175 1180,r1252 1104 1112 1138 1150,r1262 1112 1118 1182 1186,g1273 1155 1170 1192 1195,r1282 1180 1190 1224 1228,r1294 1200 1212 1248 1250,r1303 1195 1230 1248 1252'],
    [D, 'r294 330 355 378 380,g305 350 354 420 428,r317 345 358 372 385,r326 328 332 370 390,r337 370 380 418 426,g347 370 375 405 412,g358 340 342 375 380,g368 310 312 335 340,r379 320 324 356 360,r389 365 372 392 395,g401 335 342 375 396,g410 282 300 314 318,g421 285 300 312 316,g431 230 232 278 290,g443 182 234 258 268,r452 215 234 278 282,r463 250 275 302 306,g473 232 238 266 272,g485 235 242 264 268,r494 255 268 300 305,r506 295 298 336 340,r515 330 352 368 375,r526 340 345 395 400,g536 350 354 420 428,r547 340 345 352 375,g557 292 305 350 354,r568 262 264 294 300,g580 268 275 300 308,r589 270 278 320 325,r601 310 318 360 365,r611 335 350 386 388,g622 345 365 380 388,g632 290 296 325 330,r643 305 315 330 335,r652 310 310 364 368,r664 345 365 386 390,g674 358 368 390 408,g685 322 328 365 370,g695 278 280 332 336,g706 248 252 290 295,r716 245 250 260 265,g727 192 220 238 244,g737 205 218 230 235,g748 185 195 208 212,r758 178 184 236 246,g770 162 178 184 210,r779 178 184 190 222,r790 185 198 218 225,r799 205 210 252 256,g811 235 242 258 262,g820 230 232 240 258,r833 224 226 288 292,r842 300 308 332 338,r853 320 328 342 350,r863 325 342 362 365,r874 350 368 378 390,r884 340 362 394 398,g895 360 366 398 402,r905 362 368 392 395,r916 390 395 402 418,g926 375 382 388 405,r938 370 380 395 402,r950 372 388 430 434']
];
for (const [o, text] of groups) {
    for (const item of text.split(',')) {
        candles.push([o, item[0], ...item.slice(1).split(' ').map(Number)]);
    }
}

function ema(period) {
    const k = 2 / (period + 1);
    let value = null;
    return candles.map(([o, color, x, , top, bottom]) => {
        const close = o[1] + (color === 'g' ? top : bottom) / 3;
        value = value === null ? close : value + k * (close - value);
        return [o[0] + x * o[2], value];
    });
}
for (const [o, color, px, high, top, bottom, low] of candles) {
    const x = o[0] + px * o[2];
    const cls = color === 'g' ? 'up' : 'down';
    add('line', cls, { x1: x, x2: x, y1: o[1] + high / 3, y2: o[1] + low / 3 });
    add('line', cls + ' body', { x1: x, x2: x, y1: o[1] + top / 3, y2: o[1] + bottom / 3 });
}
add('path', 'slow', { d: toPath(ema(13)) });
add('path', 'fast', { d: toPath(ema(8)) });

// oscillator pane
add('line', 'split', { x1: 74, x2: 1803, y1: 856.5, y2: 856.5 });
add('line', 'zero', { x1: 76, x2: 1476, y1: 956, y2: 956 });
line('osc',
    [A, '50,1018 63,1047 84,1003 127,1003 138,978 147,973 155,987 168,962 188,964 199,930 212,930 221,944 232,921 243,938 252,930 262,965 282,887 304,929 315,908 335,966 358,987 378,985 388,968 398,973 408,992 430,978 443,992 463,948 474,803 485,915 495,912 505,886 516,802 527,847 536,857 547,878 559,794 568,808 588,825 610,886 631,912 642,900 652,917 663,906 673,859 684,846 705,863 726,783 737,838 747,852 758,883 768,890 778,944 798,968 820,885 831,855 841,849 852,852 864,837 873,863 886,877 906,912 916,923 947,944 960,938 978,936 991,961 1012,944 1040,981 1054,893 1064,873 1096,878 1117,841 1126,872 1138,881 1158,933 1168,928 1180,958 1188,961 1200,930 1222,966 1232,960 1242,972 1254,987 1265,954 1275,964 1285,937 1305,934 1317,941 1327,901 1338,929 1349,922 1368,948 1380,990 1400,934 1411,939 1422,889 1432,864 1443,885 1453,837 1474,913 1485,909 1498,932'],
    [E, '0,512 12,556 22,618 30,602 46,618 57,605 67,578 74,608 84,577 100,594 109,560 118,577 126,570 150,593 167,599 177,627 187,605 203,648 212,606 220,586 228,575 238,548 254,588 263,543 271,540 280,510 298,516 306,507 323,533 341,507 358,468 375,467 402,452 410,487 427,504 436,467 445,495 453,477 461,517 470,497 488,494 512,527 522,550 530,552 540,568 547,562 564,608 573,606 582,633 591,636 607,558 615,533 625,526 632,431 641,459 650,450 660,486 677,474 686,476 694,465 710,365 719,388 728,393 738,422 745,424 755,470 763,473 780,520 789,508 797,473 806,497 814,462 823,450 831,480 848,418 858,424 882,486 890,525 900,556 908,555 917,584 925,578 934,602 944,567 951,567 978,591 995,531 1004,531 1020,575 1029,618 1039,607 1048,586 1056,543 1063,475 1072,450 1090,417 1097,392 1107,417 1115,383 1124,396 1132,325 1141,339 1149,294 1159,375 1167,402 1176,405 1184,380 1210,458 1218,447 1227,450 1235,405 1244,383 1261,392 1270,372 1279,402 1287,468 1296,463 1305,437 1314,544 1322,522 1331,546 1339,522 1348,513 1358,541 1367,534 1375,515 1383,528 1391,513 1400,531 1409,574 1416,584 1426,618 1433,592 1451,555 1461,586 1478,618 1488,603 1495,567 1503,592 1516,596'],
    [F, '0,597 13,570 22,570 33,520 42,521 55,555 74,575 85,600 97,608 105,602 117,644 138,612 150,567 160,549 171,562 180,600 192,582 213,636 234,718 243,620 254,622 276,672 286,612 306,531 316,540 327,565 339,512 360,453 369,412 381,443 402,500 411,462 423,450 444,512 465,567 474,518 486,513 495,483 507,500 519,477 540,532 549,567 561,573 570,537 582,530 591,558 603,564 623,492 633,447 644,420 665,420 675,429 687,396 696,435 708,429 717,413 729,438 738,474 750,462 759,432 780,515 792,519 801,558 813,570 822,609 834,591 843,614 864,575 876,594 888,636']);

// drawings and crosshair
add('line', 'trend', { x1: 74, x2: 1803, y1: 685.5, y2: 685.5 });
add('line', 'trend', { x1: 1251, y1: 605, x2: 1512, y2: 589 });
add('line', 'trend', { x1: 1272, y1: 684, x2: 1536, y2: 668 });
add('line', 'cross', { x1: 74, x2: 1790, y1: 700.5, y2: 700.5 });
add('line', 'cross', { x1: 1525.5, x2: 1525.5, y1: 211, y2: 1026 });
for (const x of [499, 632, 868, 1089, 1384]) {
    const g = add('g', 'marker');
    add('circle', '', { cx: x, cy: 840, r: 14 }, g);
    add('path', '', { d: `M${x - 8} 845l5-5 4 2 7-7M${x + 2} 835h6v6` }, g);
}
// short ticks beside the last values
const ticks = [['#5c1a1c', 578], ['#8a8d94', 590], ['#9a8468', 643], ['#43206b', 667], ['#8a2566', 673], ['#6b1418', 682], ['#222a36', 956], ['#222a36', 992]];
for (const [color, y] of ticks) {
    add('line', '', { x1: 1798, x2: 1803, y1: y, y2: y, stroke: color, 'stroke-width': 2 });
}
add('circle', 'halo', { cx: 1530, cy: 698, r: 47 });
add('path', 'cursor', { d: 'M1517 698h24M1529 686v24' });

// axes
function label(axis, text, cls, side, value) {
    const el = document.createElement('span');
    el.textContent = text;
    el.className = cls;
    el.style[side] = value + '%';
    document.getElementById(axis).appendChild(el);
}
function price(text, y, cls = '') {
    label('price-axis', text, cls && 'tag ' + cls, 'top', (y - 211) / 815 * 100);
}
for (let i = 0; i < 24; i++) {
    price((87.56 - i * 3.98).toFixed(2), 221 + i * 26.87);
}
price('0.40', 887);
price('0.20', 922);
price('33.03', 590, 'gray');
price('34.79', 578, 'red');
price('25.13', 643, 'tan');
price('17.38', 698, 'lime');
price('19.32', 682, 'crimson');
price('20.65', 673, 'pink');
price('21.65', 667, 'violet');
price('16.73', 700, 'pale');
price('0.00', 956, 'maroon');
price('-0.21', 992, 'green');

const dates = [
    ['Oct', 102], ['Nov', 179], ['Dec', 249], ['2021', 326], ['Feb', 393], ['Mar', 460], ['Apr', 541],
    ['May', 615], ['Jun', 685], ['Jul', 762], ['Aug', 836], ['Sep', 913], ['Oct', 987], ['Nov', 1061],
    ['Dec', 1135], ['2022', 1212], ['Feb', 1282], ['Mar', 1349], ['Apr', 1430], ['Jun', 1620], ['Jul', 1725]
];
for (const [text, x] of dates) {
    label('time-axis', text, '', 'left', (x - 74) / 1768 * 100);
}
label('time-axis', '5/5/2022', 'date', 'left', (1525 - 74) / 1768 * 100);
```
